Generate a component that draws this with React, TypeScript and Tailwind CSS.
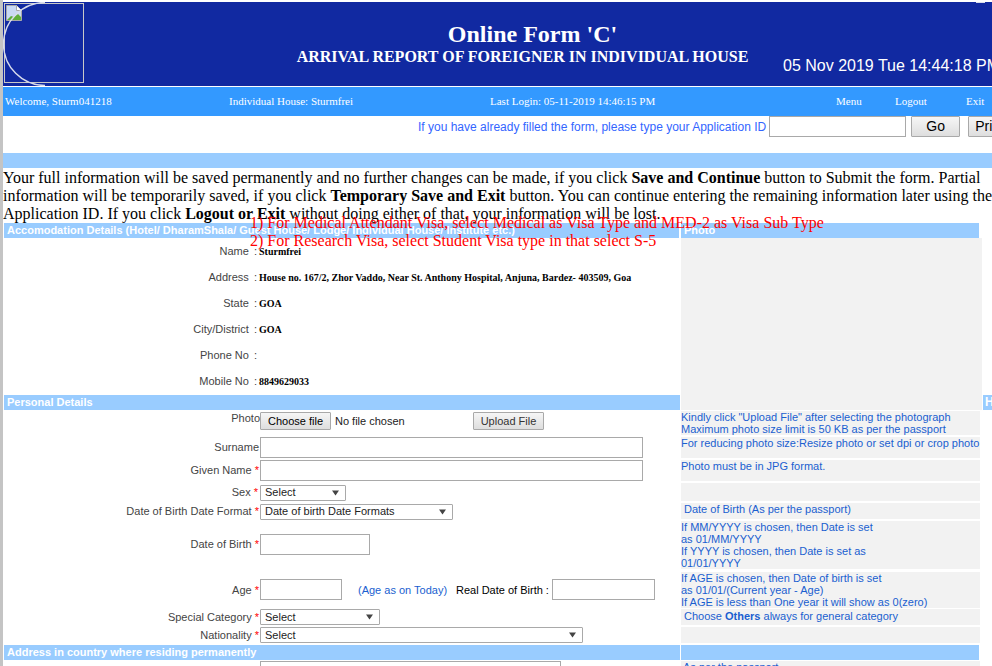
const Req = () => <span className="text-[#ff0000]"> *</span>;

function Heading({ children, className }: { children?: React.ReactNode; className: string }) {
  return (
    <div className={`h-[15px] bg-[#99ccff] pl-[3px] text-[11px] leading-[15px] font-bold text-white font-['Liberation_Sans',sans-serif] overflow-hidden whitespace-nowrap ${className}`}>
      {children}
    </div>
  );
}

function InfoRow({ label, value }: { label: string; value: string }) {
  return (
    <div className="flex h-[26px] items-center">
      <div className="w-[255px] text-right text-[11px] text-[#444] pr-[1px]">{label}<span className="ml-[2px]"> :</span></div>
      <div className="pl-[1px] text-[10px] font-bold text-black font-['Liberation_Serif',serif] whitespace-nowrap">{value}</div>
    </div>
  );
}

function FakeSelect({ text, className }: { text: string; className: string }) {
  return (
    <div className={`flex items-center justify-between border border-[#a9a9a9] rounded-[1px] pl-1 pr-[5px] text-[11px] text-[#222] bg-white ${className}`}>
      <span>{text}</span>
      <svg width="9" height="6" viewBox="0 0 9 6"><path d="M1 0.5h7L4.5 5.5z" fill="#444" /></svg>
    </div>
  );
}

function Btn({ children, className }: { children: React.ReactNode; className: string }) {
  return (
    <div className={`flex items-center justify-center border border-[#a9a9a9] rounded-[1px] bg-gradient-to-b from-[#f6f6f6] to-[#dedede] ${className}`}>
      {children}
    </div>
  );
}

const Label = ({ children, className = "" }: { children: React.ReactNode; className?: string }) => (
  <div className={`w-[257px] text-right text-[11px] text-[#444] whitespace-nowrap ${className}`}>{children}</div>
);

const Input = ({ className }: { className: string }) => (
  <div className={`border border-[#a9a9a9] bg-white box-border ${className}`} />
);

const Note = ({ children, className }: { children?: React.ReactNode; className: string }) => (
  <div className={`bg-[#f2f2f2] text-[11px] leading-[12px] text-[#1a5fd0] w-[299px] whitespace-nowrap overflow-hidden ${className}`}>{children}</div>
);

export default function App() {
  return (
    <div className="relative w-[992px] h-[666px] overflow-hidden bg-white font-['Liberation_Sans',sans-serif]">
      <div className="absolute left-0 top-0 bottom-0 w-[3px] bg-[#c4c4c4]" />
      <div className="pl-[3px] pt-[2px] w-[1100px]">
        {/* Header */}
        <div className="relative flex h-[84px] w-[989px] bg-[#1129a1] text-white">
          <div className="absolute left-[1px] top-[1px] w-[80px] h-[80px] border border-[#c8c8c8]">
            <svg width="16" height="16" viewBox="0 0 16 16" className="absolute left-[1px] top-[1px]">
              <path d="M0.5 0.5h10l5 5v10h-15z" fill="#c9d9f4" stroke="#a8a8a8" />
              <path d="M1 15l4-4 3 1 4-3 3 3v3z" fill="#5fae3a" />
              <path d="M10.5 0.5v5h5" fill="#fff" stroke="#a8a8a8" />
            </svg>
          </div>
          <svg width="44" height="84" viewBox="0 0 44 84" className="absolute left-0 top-0">
            <path d="M42 0.5A41.5 41.5 0 0 0 42 83.5" fill="none" stroke="#d8dcec" strokeWidth="1.4" />
          </svg>
          <div className="absolute right-[7px] top-0 w-[9px] h-[1px] bg-[#d8dcec]" />
          <div className="flex-1 flex flex-col items-center pl-[71px] pr-[1px]">
            <div className="mt-[19px] text-[24px] leading-[27px] font-bold font-['Liberation_Serif',serif]">Online Form 'C'</div>
            <div className="text-[16px] leading-[18px] font-bold font-['Liberation_Serif',serif] mr-[20px] whitespace-nowrap">ARRIVAL REPORT OF FOREIGNER IN INDIVIDUAL HOUSE</div>
          </div>
          <div className="absolute left-[780px] top-[55px] text-[16px] leading-[18px] whitespace-nowrap">05 Nov 2019 Tue 14:44:18 PM</div>
        </div>

        {/* Nav bar */}
        <div className="relative h-[30px] w-[989px] bg-[#3399ff] border-t border-white text-[11px] text-white font-['Liberation_Serif',serif] flex items-center whitespace-nowrap">
          <span className="ml-[2px] w-[224px]">Welcome, Sturm041218</span>
          <span className="w-[261px]">Individual House: Sturmfrei</span>
          <span className="w-[346px]">Last Login: 05-11-2019 14:46:15 PM</span>
          <span className="w-[59px]">Menu</span>
          <span className="w-[71px]">Logout</span>
          <span>Exit</span>
        </div>

        {/* Application id row */}
        <div className="flex h-[37px] items-start whitespace-nowrap">
          <span className="ml-[415px] mt-[4px] text-[12px] leading-[15px] text-[#3366ff]">If you have already filled the form, please type your Application ID</span>
          <div className="ml-[3px] w-[137px] h-[21px] border border-[#a9a9a9]" />
          <Btn className="ml-[5px] w-[49px] h-[21px] text-[14px] text-black">Go</Btn>
          <Btn className="ml-[8px] w-[60px] h-[21px] text-[14px] text-black justify-start! pl-[6px]">Print</Btn>
        </div>
        <div className="h-[15px] w-[989px] bg-[#99ccff]" />

        {/* Instructions */}
        <p className="w-[989px] text-[16px] leading-[18px] text-black font-['Liberation_Serif',serif] pt-[1px] h-[55px]">
          Your full information will be saved permanently and no further changes can be made, if you click <b>Save and Continue</b> button to Submit the form. Partial information will be temporarily saved, if you click <b>Temporary Save and Exit</b> button. You can continue entering the remaining information later using the Application ID. If you click <b>Logout or Exit</b> without doing either of that, your information will be lost.
        </p>

        <div className="flex">
          {/* Form column */}
          <div className="w-[678px]">
            <Heading className="ml-[1px] w-[675px]">Accomodation Details (Hotel/ DharamShala/ Guest House/ Lodge/ Individual House/ Institute etc.)</Heading>
            <InfoRow label="Name" value="Sturmfrei" />
            <InfoRow label="Address" value="House no. 167/2, Zhor Vaddo, Near St. Anthony Hospital, Anjuna, Bardez- 403509, Goa" />
            <InfoRow label="State" value="GOA" />
            <InfoRow label="City/District" value="GOA" />
            <InfoRow label="Phone No" value="" />
            <InfoRow label="Mobile No" value="8849629033" />
            <Heading className="ml-[1px] w-[676px] mt-[1px]">Personal Details</Heading>

            <div className="flex h-[27px] pt-[1px] text-[11px]">
              <Label className="leading-[14px]">Photo</Label>
              <Btn className="w-[71px] h-[18px] mt-[1px] text-[11px] text-black">Choose file</Btn>
              <span className="ml-[4px] mt-[3px] leading-[14px] text-[#222] w-[138px]">No file chosen</span>
              <Btn className="w-[71px] h-[18px] mt-[1px] text-[11px] text-[#333]">Upload File</Btn>
            </div>
            <div className="flex h-[23px] items-start"><Label className="leading-[21px] pr-[1px]">Surname</Label><Input className="w-[383px] h-[21px]" /></div>
            <div className="flex h-[23px] items-start"><Label className="leading-[21px] pr-[1px]">Given Name <Req /></Label><Input className="w-[383px] h-[21px]" /></div>
            <div className="flex h-[19px] items-center"><Label className="pr-[2px]">Sex <Req /></Label><FakeSelect text="Select" className="w-[86px] h-[16px]" /></div>
            <div className="flex h-[19px] items-center"><Label className="pr-[1px]">Date of Birth Date Format <Req /></Label><FakeSelect text="Date of birth Date Formats" className="w-[193px] h-[16px]" /></div>
            <div className="flex h-[46px] items-center"><Label className="pr-[1px] pt-[1px]">Date of Birth <Req /></Label><Input className="w-[110px] h-[21px]" /></div>
            <div className="flex h-[41px] pt-[4px] items-center whitespace-nowrap text-[11px]">
              <Label className="pr-[1px] pt-[1px]">Age <Req /></Label>
              <Input className="w-[82px] h-[21px]" />
              <span className="ml-[16px] pt-[1px] w-[98px] text-[#1a5fd0]">(Age as on Today)</span>
              <span className="text-black pt-[1px] w-[96px]">Real Date of Birth :</span>
              <Input className="w-[103px] h-[21px]" />
            </div>
            <div className="flex h-[18px] items-center"><Label className="pr-[1px]">Special Category <Req /></Label><FakeSelect text="Select" className="w-[120px] h-[16px]" /></div>
            <div className="flex h-[18px] items-center"><Label className="pr-[1px]">Nationality <Req /></Label><FakeSelect text="Select" className="w-[323px] h-[16px]" /></div>
            <Heading className="ml-[1px] w-[676px] mt-[1px]">Address in country where residing permanently</Heading>
            <Input className="ml-[257px] mt-[1px] w-[301px] h-[21px]" />
          </div>

          {/* Help column */}
          <div className="w-[311px]">
            <div className="w-[298px] h-[15px] bg-[#99ccff] pl-[3px] text-[11px] leading-[15px] font-bold text-white">Photo</div>
            <div className="relative w-[301px] h-[172px] bg-[#f2f2f2]">
              <div className="absolute left-[302px] top-[157px] w-[20px] h-[15px] bg-[#99ccff] pl-[2px] text-[12px] leading-[15px] font-bold text-white">H</div>
            </div>
            <Note className="mt-[1px] h-[24px]">Kindly click "Upload File" after selecting the photograph<br />Maximum photo size limit is 50 KB as per the passport</Note>
            <Note className="mt-[2px] h-[21px]">For reducing photo size:Resize photo or set dpi or crop photo</Note>
            <Note className="mt-[2px] h-[21px]">Photo must be in JPG format.</Note>
            <Note className="mt-[2px] h-[18px]" />
            <Note className="mt-[2px] h-[16px] pl-[3px] leading-[13px]">Date of Birth (As per the passport)</Note>
            <Note className="mt-[2px] h-[48px]">If MM/YYYY is chosen, then Date is set<br />as 01/MM/YYYY<br />If YYYY is chosen, then Date is set as<br />01/01/YYYY</Note>
            <Note className="mt-[3px] h-[36px]">If AGE is chosen, then Date of birth is set<br />as 01/01/(Current year - Age)<br />If AGE is less than One year it will show as 0(zero)</Note>
            <Note className="mt-[1px] h-[16px] pl-[3px] leading-[14px]">Choose <b className="font-semibold">Others</b> always for general category</Note>
            <Note className="mt-[2px] h-[16px]" />
            <div className="mt-[2px] w-[298px] h-[15px] bg-[#99ccff]" />
            <Note className="mt-[1px] h-[20px] pl-[2px]">As per the passport</Note>
          </div>
        </div>
      </div>

      {/* Red notice lies over the form */}
      <div className="absolute left-[250px] top-[214px] text-[16px] leading-[18px] text-[#ff0000] font-['Liberation_Serif',serif] whitespace-nowrap">
        <div>1) For Medical Attendant Visa, select Medical as Visa Type and MED-2 as Visa Sub Type</div>
        <div>2) For Research Visa, select Student Visa type in that select S-5</div>
      </div>
    </div>
  );
}
